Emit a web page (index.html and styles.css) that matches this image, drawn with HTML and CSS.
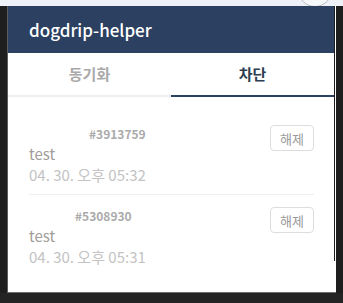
FILE: index.html
```html
<!DOCTYPE html>
<html>

<head>
    <meta charset="utf-8">
    <link rel="stylesheet" href="styles.css">
</head>

<body>
    <div class="chrome">
        <div class="chrome-btn"></div>
    </div>
    <div class="stage">
        <div class="popup">
            <div class="app">
                <div class="topbar">dogdrip-helper</div>
                <div class="tabs">
                    <div class="tab">동기화</div>
                    <div class="tab active">차단</div>
                </div>
                <ul class="list">
                    <li class="item">
                        <div class="info">
                            <div class="uid uid-a">#3913759</div>
                            <div class="nick">test</div>
                            <div class="date">04. 30. 오후 05:32</div>
                        </div>
                        <button class="unblock" type="button">해제</button>
                    </li>
                    <li class="item">
                        <div class="info">
                            <div class="uid uid-b">#5308930</div>
                            <div class="nick">test</div>
                            <div class="date">04. 30. 오후 05:31</div>
                        </div>
                        <button class="unblock" type="button">해제</button>
                    </li>
                </ul>
            </div>
            <div class="edge"></div>
        </div>
    </div>
</body>

</html>
```

FILE: styles.css
```css
body {
    margin: 0;
    background: #242424;
    font-family: "Noto Sans CJK KR", "Noto Sans", sans-serif;
    overflow: hidden;
}

.chrome {
    height: 6px;
    background: #eef1f7;
    display: flex;
    overflow: hidden;
}

.chrome-btn {
    width: 32px;
    height: 32px;
    margin: -27px 0 0 298px;
    border-radius: 50%;
    border: 1px solid #b9bcc2;
    background: #f7f8fa;
}

.stage {
    display: flex;
    padding-left: 7px;
    background: #1e1e1e;
}

.popup {
    width: 328px;
    height: 286px;
    display: flex;
    background: #fff;
    border-left: 1px solid #5c5c5c;
    border-bottom: 1px solid #6e6e6e;
}

.app {
    width: 326px;
}

.edge {
    width: 1px;
    height: 255px;
    background: #1b1b1b;
}

.topbar {
    height: 47px;
    line-height: 47px;
    padding-left: 21px;
    background: #2c4161;
    color: #fff;
    font-size: 17px;
    font-weight: 500;
}

.tabs {
    display: flex;
}

.tab {
    flex: 1;
    text-align: center;
    line-height: 42px;
    font-size: 15px;
    font-weight: bold;
    color: #a9a9a9;
    border-bottom: 2px solid #eeeeee;
}

.tab.active {
    color: #2c3e50;
    border-bottom-color: #2c4161;
}

.list {
    list-style: none;
    margin: 0;
    padding: 16px 20px 0 21px;
}

.item {
    display: flex;
    justify-content: space-between;
    align-items: flex-start;
    padding: 12px 0 9px 0;
    border-bottom: 1px solid #eeeeee;
}

.item:last-child {
    border-bottom: none;
}

.uid {
    font-size: 12px;
    line-height: 18px;
    font-weight: bold;
    color: #aaaaaa;
}

.uid-a {
    padding-left: 60px;
}

.uid-b {
    padding-left: 46px;
}

.nick {
    font-size: 15px;
    line-height: 21px;
    color: #a09c99;
}

.date {
    font-size: 15px;
    line-height: 21px;
    color: #c3c3c3;
}

.unblock {
    width: 44px;
    height: 26px;
    padding: 0;
    background: #fff;
    border: 1px solid #dddddd;
    border-radius: 4px;
    font-family: inherit;
    font-size: 13px;
    color: #9a9a9a;
}
```
